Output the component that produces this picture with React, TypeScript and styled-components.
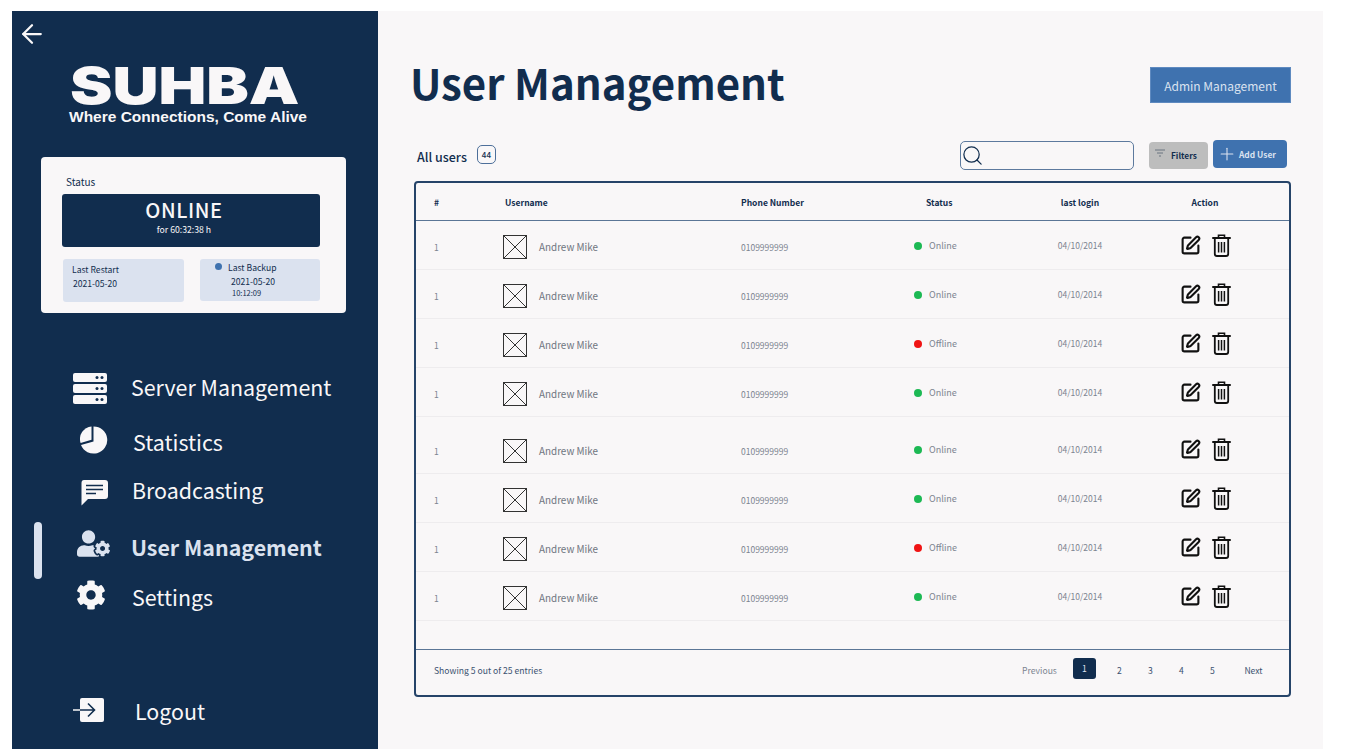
import { FC } from 'react';
import styled, { createGlobalStyle } from 'styled-components';
import { ArrowLeft, Plus, Search, SquarePen } from 'lucide-react';
import { FaCog, FaUserCog } from 'react-icons/fa';

const NAVY = '#112d4e';
const BLUE = '#3f72af';
const PALE = '#dbe2ef';
const PAPER = '#f9f7f8';
const FONT = '"Noto Sans CJK SC", "Noto Sans", sans-serif';

const GlobalStyle = createGlobalStyle`
    html, body {
        margin: 0;
        height: 755px;
        overflow: hidden;
        background: #fff;
        font-family: ${FONT};
    }
    * { box-sizing: border-box; }
`;

const Shell = styled.div`
    display: flex;
    width: 1311px;
    height: 738px;
    margin: 11px 0 0 12px;
`;

const Sidebar = styled.aside`
    position: relative;
    flex: 0 0 366px;
    display: flex;
    flex-direction: column;
    background: ${NAVY};
    color: ${PAPER};
`;

const BackButton = styled.div`
    height: 44px;
    padding: 8px 0 0 5px;
    line-height: 0;
`;

const Logo = styled.div`
    height: 102px;
    padding-top: 9px;
    text-align: center;
`;

const LogoMark = styled.div`
    width: 227px;
    margin-left: 58px;
    font-family: "Inter", "Liberation Sans", sans-serif;
    font-weight: 900;
    font-size: 51px;
    line-height: 44px;
    height: 44px;
    text-align: left;
    white-space: nowrap;
    transform: scaleX(1.25);
    transform-origin: left center;
`;

const LogoTagline = styled.div`
    width: 366px;
    padding-right: 14px;
    font-family: "Liberation Sans", Arial, sans-serif;
    font-weight: 700;
    font-size: 15.5px;
    line-height: 18px;
    white-space: nowrap;
`;

const StatusCard = styled.section`
    width: 305px;
    height: 156px;
    margin-left: 29px;
    padding: 17px 26px 0 21px;
    background: ${PAPER};
    border-radius: 4px;
    color: ${NAVY};
`;

const StatusLabel = styled.div`
    padding-left: 4px;
    font-size: 10px;
    line-height: 16px;
    height: 20px;
`;

const OnlineBox = styled.div`
    height: 53px;
    padding: 2px 14px 0 0;
    background: ${NAVY};
    color: ${PAPER};
    border-radius: 3px;
    text-align: center;
`;

const OnlineTitle = styled.div`
    font-size: 20px;
    font-weight: 500;
    line-height: 27px;
    letter-spacing: 0.6px;
`;

const OnlineFor = styled.div`
    font-size: 8.7px;
    line-height: 12px;
    margin-top: 1px;
`;

const StatusGrid = styled.div`
    display: flex;
    gap: 16px;
    margin: 12px 0 0 1px;
`;

const StatusTile = styled.div<{ $indent: number; $top: number }>`
    flex: 0 0 ${p => (p.$indent > 20 ? 120 : 121)}px;
    height: ${p => (p.$indent > 20 ? 42 : 43)}px;
    padding: ${p => p.$top}px 0 0 ${p => p.$indent}px;
    background: ${PALE};
    border-radius: 3px;
    font-size: 8.6px;
    line-height: 14px;
`;

const BackupHead = styled.div`
    position: relative;
    margin-left: -1px;
`;

const BackupDot = styled.span`
    position: absolute;
    left: -13px;
    top: 3px;
    width: 7px;
    height: 7px;
    border-radius: 50%;
    background: ${BLUE};
`;

const TileValue = styled.div<{ $shift: number }>`
    margin-left: ${p => p.$shift}px;
`;

const TileTime = styled.div`
    margin: -1px 0 0 3px;
    font-size: 7.5px;
    line-height: 12px;
`;

const Nav = styled.nav`
    display: flex;
    flex-direction: column;
    margin-top: 42px;
`;

const NavItem = styled.div<{ $h: number; $active?: boolean }>`
    display: flex;
    align-items: center;
    height: ${p => p.$h}px;
    font-size: 21.4px;
    font-weight: ${p => (p.$active ? 700 : 400)};
    color: ${p => (p.$active ? PALE : PAPER)};
    white-space: nowrap;
`;

const NavIcon = styled.span<{ $left: number; $width: number; $dy?: number }>`
    flex: 0 0 ${p => p.$width}px;
    padding-left: ${p => p.$left}px;
    margin-top: ${p => p.$dy ?? 0}px;
    line-height: 0;
`;

const ActiveBar = styled.span`
    position: absolute;
    left: 22px;
    top: 511px;
    width: 8px;
    height: 57px;
    border-radius: 4px;
    background: ${PALE};
`;

const LogoutSlot = styled.div`
    margin-top: 73px;
`;

const Main = styled.main`
    flex: 1;
    padding: 0 0 0 33px;
    background: ${PAPER};
    color: ${NAVY};
`;

const PageHead = styled.header`
    display: flex;
    justify-content: space-between;
    align-items: flex-start;
    width: 880px;
    height: 129px;
    padding-top: 40px;
`;

const Title = styled.h1`
    margin: 0 0 0 -1px;
    font-size: 42px;
    font-weight: 700;
    line-height: 62px;
`;

const AdminButton = styled.button`
    width: 141px;
    height: 36px;
    margin-top: 16px;
    border: 1px solid #5f8ac0;
    background: ${BLUE};
    color: ${PALE};
    font-family: ${FONT};
    font-size: 12px;
    padding: 0;
`;

const Toolbar = styled.div`
    display: flex;
    align-items: center;
    width: 876px;
    height: 30px;
    padding-left: 6px;
`;

const AllUsers = styled.span`
    font-size: 12.5px;
    font-weight: 500;
    margin-top: 2px;
`;

const CountBadge = styled.span`
    display: flex;
    align-items: center;
    justify-content: center;
    width: 19px;
    height: 19px;
    margin: 0 0 1px 10px;
    border: 1px solid #4d6f9a;
    border-radius: 5px;
    font-size: 8px;
    font-weight: 500;
`;

const SearchBox = styled.div`
    display: flex;
    align-items: center;
    width: 174px;
    height: 29px;
    margin: 1px 0 0 auto;
    border: 1px solid #5d7a9e;
    border-radius: 5px;
    background: ${PAPER};
`;

const FilterButton = styled.button`
    display: flex;
    align-items: center;
    width: 59px;
    height: 27px;
    margin-left: 15px;
    padding: 0 0 0 6px;
    gap: 6px;
    border: 0;
    border-radius: 4px;
    background: #bdbdbd;
    color: ${NAVY};
    font-family: ${FONT};
    font-size: 8.3px;
    font-weight: 700;
    svg { margin-top: -5px; }
`;

const AddButton = styled.button`
    display: flex;
    align-items: center;
    width: 74px;
    height: 28px;
    margin: -2px 0 0 5px;
    padding: 0 0 0 4px;
    gap: 2px;
    border: 0;
    border-radius: 4px;
    background: ${BLUE};
    color: ${PALE};
    font-family: ${FONT};
    font-size: 8.4px;
    font-weight: 700;
`;

const TableCard = styled.section`
    display: flex;
    flex-direction: column;
    width: 877px;
    height: 516px;
    margin: 11px 0 0 3px;
    border: 2px solid #264469;
    border-radius: 4px;
`;

const Columns = `69px 238px 160px 119px 120px 130px`;

const HeadRow = styled.div`
    display: grid;
    grid-template-columns: ${Columns};
    align-items: center;
    flex: 0 0 38px;
    padding-left: 18px;
    border-bottom: 1px solid #5b7696;
    font-size: 8.5px;
    font-weight: 700;
`;

const HeadCell = styled.span<{ $left?: number; $center?: boolean }>`
    padding-left: ${p => p.$left ?? 0}px;
    text-align: ${p => (p.$center ? 'center' : 'left')};
`;

const Row = styled.div<{ $h: number }>`
    display: grid;
    grid-template-columns: ${Columns};
    align-items: center;
    flex: 0 0 ${p => p.$h}px;
    padding: ${p => p.$h - 49}px 0 0 18px;
    border-bottom: 1px solid #eeecee;
    color: #7c8490;
`;

const IndexCell = styled.span`
    font-size: 8.5px;
    padding-top: 3px;
`;

const UserCell = styled.span`
    display: flex;
    align-items: center;
    gap: 12px;
    font-size: 9.9px;
    padding-top: 3px;
    color: #6f7580;
`;

const Avatar = styled.svg`
    display: block;
    flex: none;
`;

const PhoneCell = styled.span`
    font-size: 8.5px;
    padding-top: 4px;
`;

const StatusCell = styled.span`
    display: flex;
    align-items: center;
    gap: 7px;
    padding-left: 13px;
    font-size: 9px;
`;

const Dot = styled.i<{ $on: boolean }>`
    width: 8px;
    height: 8px;
    margin-top: 1px;
    border-radius: 50%;
    background: ${p => (p.$on ? '#1db954' : '#f01414')};
`;

const DateCell = styled.span`
    font-size: 8.5px;
    text-align: center;
`;

const ActionCell = styled.span`
    display: flex;
    align-items: center;
    gap: 11px;
    padding-left: 40px;
    color: #111;
    line-height: 0;
`;

const Spacer = styled.div`
    flex: 1;
    border-bottom: 1px solid #5b7696;
`;

const Footer = styled.footer`
    display: flex;
    align-items: center;
    flex: 0 0 45px;
    padding: 0 10px 6px 18px;
    font-size: 8.6px;
    color: #3c5270;
`;

const Pager = styled.div`
    display: flex;
    align-items: center;
    margin-left: auto;
`;

const PagerLink = styled.span<{ $w: number; $muted?: boolean }>`
    width: ${p => p.$w}px;
    text-align: center;
    color: ${p => (p.$muted ? '#7c8490' : '#3c5270')};
`;

const PagerCurrent = styled.span`
    width: 23px;
    height: 21px;
    line-height: 20px;
    margin: -2px 8px 0 16px;
    border-radius: 3px;
    text-align: center;
    background: ${NAVY};
    color: ${PALE};
`;

const ServerIcon = () => (
    <svg width="34" height="31" viewBox="0 0 34 31">
        {[0, 11, 22].map(y => (
            <g key={y}>
                <rect x="0" y={y} width="34" height="9" rx="2" fill={PAPER} />
                <circle cx="24" cy={y + 4.5} r="1.5" fill={NAVY} />
                <circle cx="29" cy={y + 4.5} r="1.5" fill={NAVY} />
            </g>
        ))}
    </svg>
);

const PieIcon = () => (
    <svg width="28" height="28" viewBox="0 0 28 28" fill={PAPER}>
        <path d="M13.5 0.4 A13.6 13.6 0 1 1 1 19 L13.5 15.4 Z" />
        <path d="M11.5 0.5 V13.8 L0.6 17 A12.6 12.6 0 0 1 11.5 0.5 Z" />
    </svg>
);

const ChatIcon = () => (
    <svg width="27" height="26" viewBox="0 0 27 26">
        <path d="M3 0 H24 Q27 0 27 3 V16 Q27 19 24 19 H7 L0.5 25.5 V3 Q0.5 0 3 0 Z" fill={PAPER} />
        <path d="M5 5.5 H22 M5 9.5 H22 M5 13.5 H15" stroke={NAVY} strokeWidth="1.5" />
    </svg>
);

const LogoutIcon = () => (
    <svg width="31" height="25" viewBox="0 0 31 25">
        <rect x="7" y="0" width="24" height="24" rx="2" fill={PAPER} />
        <path d="M0 12 H7" stroke={PAPER} strokeWidth="1.5" />
        <path d="M7 12 H21 M15 5.5 L21.5 12 L15 18.5" stroke={NAVY} strokeWidth="1.6" fill="none" />
    </svg>
);

const TrashIcon = () => (
    <svg width="19" height="23" viewBox="0 0 19 23" fill="none" stroke="#111">
        <path d="M1 4 H18" strokeWidth="2" strokeLinecap="round" />
        <path d="M6.5 3.5 V1.2 H12.5 V3.5" strokeWidth="1.6" />
        <path d="M2.8 4.5 V20 Q2.8 22 5 22 H14 Q16.2 22 16.2 20 V4.5" strokeWidth="1.8" />
        <path d="M6.6 8 V18.5 M9.5 8 V18.5 M12.4 8 V18.5" strokeWidth="1.5" />
    </svg>
);

const FilterIcon = () => (
    <svg width="10" height="8" viewBox="0 0 10 8" stroke="#6b7480" strokeWidth="1">
        <path d="M0 1 H10 M2 4 H8 M4 7 H6" />
    </svg>
);

const users = [
    { h: 49, on: true },
    { h: 49, on: true },
    { h: 49, on: false },
    { h: 49, on: true },
    { h: 57, on: true },
    { h: 49, on: true },
    { h: 49, on: false },
    { h: 49, on: true },
];

export const App: FC = () => (
    <>
        <GlobalStyle />
        <Shell>
            <Sidebar>
                <BackButton>
                    <ArrowLeft size={30} color={PAPER} strokeWidth={1.8} />
                </BackButton>
                <Logo>
                    <LogoMark>SUHBA</LogoMark>
                    <LogoTagline>Where Connections, Come Alive</LogoTagline>
                </Logo>
                <StatusCard>
                    <StatusLabel>Status</StatusLabel>
                    <OnlineBox>
                        <OnlineTitle>ONLINE</OnlineTitle>
                        <OnlineFor>for 60:32:38 h</OnlineFor>
                    </OnlineBox>
                    <StatusGrid>
                        <StatusTile $indent={9} $top={3}>
                            Last Restart
                            <TileValue $shift={1}>2021-05-20</TileValue>
                        </StatusTile>
                        <StatusTile $indent={29} $top={1}>
                            <BackupHead>
                                <BackupDot />
                                Last Backup
                            </BackupHead>
                            <TileValue $shift={2}>2021-05-20</TileValue>
                            <TileTime>10:12:09</TileTime>
                        </StatusTile>
                    </StatusGrid>
                </StatusCard>
                <Nav>
                    <NavItem $h={62}>
                        <NavIcon $left={61} $width={119} $dy={4}><ServerIcon /></NavIcon>
                        Server Management
                    </NavItem>
                    <NavItem $h={48}>
                        <NavIcon $left={68} $width={121} $dy={-2}><PieIcon /></NavIcon>
                        Statistics
                    </NavItem>
                    <NavItem $h={48}>
                        <NavIcon $left={69} $width={120} $dy={8}><ChatIcon /></NavIcon>
                        Broadcasting
                    </NavItem>
                    <NavItem $h={66} $active>
                        <NavIcon $left={65} $width={119} $dy={-6}><FaUserCog size={33} color={PALE} /></NavIcon>
                        User Management
                    </NavItem>
                    <NavItem $h={34}>
                        <NavIcon $left={64} $width={120} $dy={-2}><FaCog size={30} color={PAPER} /></NavIcon>
                        Settings
                    </NavItem>
                    <LogoutSlot>
                        <NavItem $h={48}>
                            <NavIcon $left={61} $width={123}><LogoutIcon /></NavIcon>
                            Logout
                        </NavItem>
                    </LogoutSlot>
                </Nav>
                <ActiveBar />
            </Sidebar>
            <Main>
                <PageHead>
                    <Title>User Management</Title>
                    <AdminButton>Admin Management</AdminButton>
                </PageHead>
                <Toolbar>
                    <AllUsers>All users</AllUsers>
                    <CountBadge>44</CountBadge>
                    <SearchBox>
                        <Search size={23} color={NAVY} strokeWidth={1.3} />
                    </SearchBox>
                    <FilterButton>
                        <FilterIcon />
                        Filters
                    </FilterButton>
                    <AddButton>
                        <Plus size={20} strokeWidth={1.3} />
                        Add User
                    </AddButton>
                </Toolbar>
                <TableCard>
                    <HeadRow>
                        <HeadCell>#</HeadCell>
                        <HeadCell $left={2}>Username</HeadCell>
                        <HeadCell>Phone Number</HeadCell>
                        <HeadCell $left={25}>Status</HeadCell>
                        <HeadCell $center>last login</HeadCell>
                        <HeadCell $center>Action</HeadCell>
                    </HeadRow>
                    {users.map((user, index) => (
                        <Row key={index} $h={user.h}>
                            <IndexCell>1</IndexCell>
                            <UserCell>
                                <Avatar width="24" height="24" viewBox="0 0 24 24" fill="none" stroke="#333" strokeWidth="1">
                                    <rect x="0.5" y="0.5" width="23" height="23" />
                                    <path d="M0.5 0.5 L23.5 23.5 M23.5 0.5 L0.5 23.5" />
                                </Avatar>
                                Andrew Mike
                            </UserCell>
                            <PhoneCell>0109999999</PhoneCell>
                            <StatusCell>
                                <Dot $on={user.on} />
                                {user.on ? 'Online' : 'Offline'}
                            </StatusCell>
                            <DateCell>04/10/2014</DateCell>
                            <ActionCell>
                                <SquarePen size={21} strokeWidth={2.4} />
                                <TrashIcon />
                            </ActionCell>
                        </Row>
                    ))}
                    <Spacer />
                    <Footer>
                        Showing 5 out of 25 entries
                        <Pager>
                            <PagerLink $w={35} $muted>Previous</PagerLink>
                            <PagerCurrent>1</PagerCurrent>
                            <PagerLink $w={31}>2</PagerLink>
                            <PagerLink $w={31}>3</PagerLink>
                            <PagerLink $w={31}>4</PagerLink>
                            <PagerLink $w={31}>5</PagerLink>
                            <PagerLink $w={51}>Next</PagerLink>
                        </Pager>
                    </Footer>
                </TableCard>
            </Main>
        </Shell>
    </>
);

export default App;
